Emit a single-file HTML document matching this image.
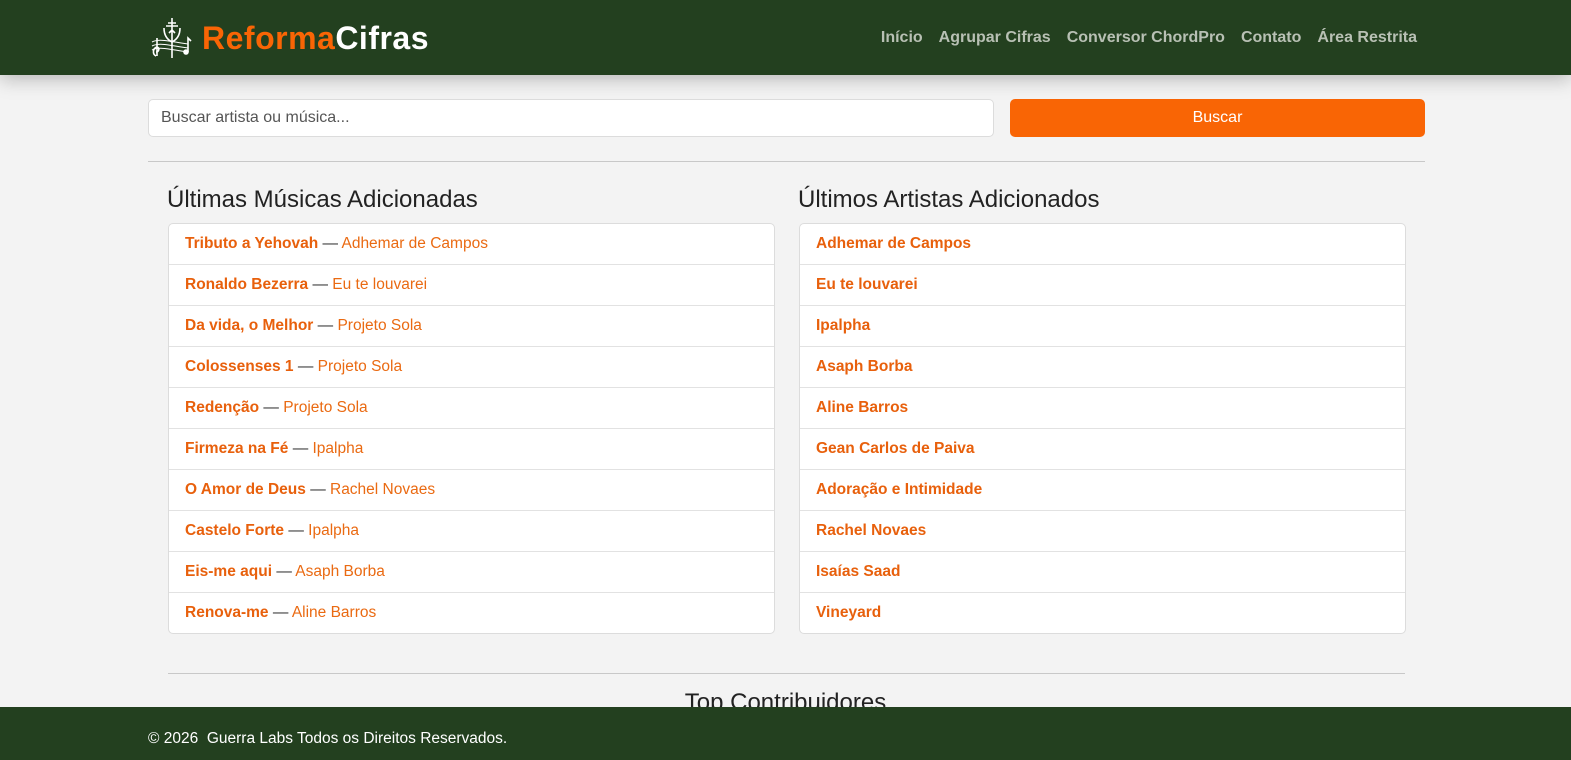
<!DOCTYPE html>
<html><head><meta charset="utf-8"><style>
*{box-sizing:border-box;margin:0;padding:0}
body{width:1571px;height:760px;overflow:hidden;background:#f3f3f3;font-family:"Liberation Sans",Roboto,sans-serif;position:relative}
.hdr{position:absolute;left:0;top:0;width:1571px;height:75px;background:#23401f;box-shadow:0 4px 18px rgba(0,0,0,.25);z-index:2}
.logo{position:absolute;left:148px;top:16px;display:flex;align-items:center}
.logo b{font-size:32px;font-weight:bold;letter-spacing:.5px;margin-left:8px}
.nav{position:absolute;right:154px;top:29px;font-size:16px;font-weight:bold;color:#b8c0b4}
.nav span{margin-left:16px}
.inp{position:absolute;left:148px;top:99px;width:846px;height:38px;background:#fff;border:1px solid #dcdcdc;border-radius:5px;font-size:16px;color:#555;padding:9px 12px}
.btn{position:absolute;left:1010px;top:99px;width:415px;height:38px;background:#f96505;border-radius:5px;color:#fff;font-size:16px;text-align:center;line-height:38px}
.hr{position:absolute;height:1px;background:#c8c8c8}
h2{position:absolute;font-size:24px;font-weight:normal;color:#222;top:186px}
.list{position:absolute;top:223px;width:607px;background:#fff;border:1px solid #dcdcdc;border-radius:5px}
.list div{height:41px;border-top:1px solid #e2e2e2;padding-left:16px;line-height:39px;font-size:15.5px;color:#ea6a12}
.list div:first-child{border-top:none;height:40px}
.list b{color:#e8600c}
.list i{font-style:normal;color:#333}
.ftr{position:absolute;left:0;top:707px;width:1571px;height:53px;background:#23401f;color:#fff;font-size:15.5px;padding:23px 0 0 148px;z-index:2}
</style></head><body>
<div class="hdr">
 <div class="logo">
  <svg width="46" height="44" viewBox="0 0 46 44" fill="none" stroke="#fff" stroke-width="1.6">
   <path d="M24 2v40M18 10h12M20 7h8M21 17l3-3 3 3M16 12c0 8 4 12 8 14 4-2 8-6 8-14"/>
   <path d="M4 26c8-4 20 0 36 2M4 30c8-4 20 0 36 2M4 34c8-4 20 0 36 2" stroke-width="1"/>
   <path d="M8 40c-4-2-3-8 1-9 3 1 2 5-1 5M9 22v18"/>
   <circle cx="38" cy="36" r="2" fill="#fff"/><path d="M40 36V22l3 3"/>
  </svg>
  <b><span style="color:#f96505">Reforma</span><span style="color:#fff">Cifras</span></b>
 </div>
 <div class="nav"><span>Início</span><span>Agrupar Cifras</span><span>Conversor ChordPro</span><span>Contato</span><span>Área Restrita</span></div>
</div>
<div class="inp">Buscar artista ou música...</div>
<div class="btn">Buscar</div>
<div class="hr" style="left:148px;top:161px;width:1277px"></div>
<h2 style="left:167px">Últimas Músicas Adicionadas</h2>
<h2 style="left:798px">Últimos Artistas Adicionados</h2>
<div class="list" style="left:168px">
<div><b>Tributo a Yehovah</b> <i>—</i> Adhemar de Campos</div>
<div><b>Ronaldo Bezerra</b> <i>—</i> Eu te louvarei</div>
<div><b>Da vida, o Melhor</b> <i>—</i> Projeto Sola</div>
<div><b>Colossenses 1</b> <i>—</i> Projeto Sola</div>
<div><b>Redenção</b> <i>—</i> Projeto Sola</div>
<div><b>Firmeza na Fé</b> <i>—</i> Ipalpha</div>
<div><b>O Amor de Deus</b> <i>—</i> Rachel Novaes</div>
<div><b>Castelo Forte</b> <i>—</i> Ipalpha</div>
<div><b>Eis-me aqui</b> <i>—</i> Asaph Borba</div>
<div><b>Renova-me</b> <i>—</i> Aline Barros</div>
</div>
<div class="list" style="left:799px">
<div><b>Adhemar de Campos</b></div>
<div><b>Eu te louvarei</b></div>
<div><b>Ipalpha</b></div>
<div><b>Asaph Borba</b></div>
<div><b>Aline Barros</b></div>
<div><b>Gean Carlos de Paiva</b></div>
<div><b>Adoração e Intimidade</b></div>
<div><b>Rachel Novaes</b></div>
<div><b>Isaías Saad</b></div>
<div><b>Vineyard</b></div>
</div>
<div class="hr" style="left:168px;top:673px;width:1237px"></div>
<h2 style="left:0;width:1571px;text-align:center;top:689px">Top Contribuidores</h2>
<div class="ftr">© 2026&nbsp; Guerra Labs Todos os Direitos Reservados.</div>
</body></html>
